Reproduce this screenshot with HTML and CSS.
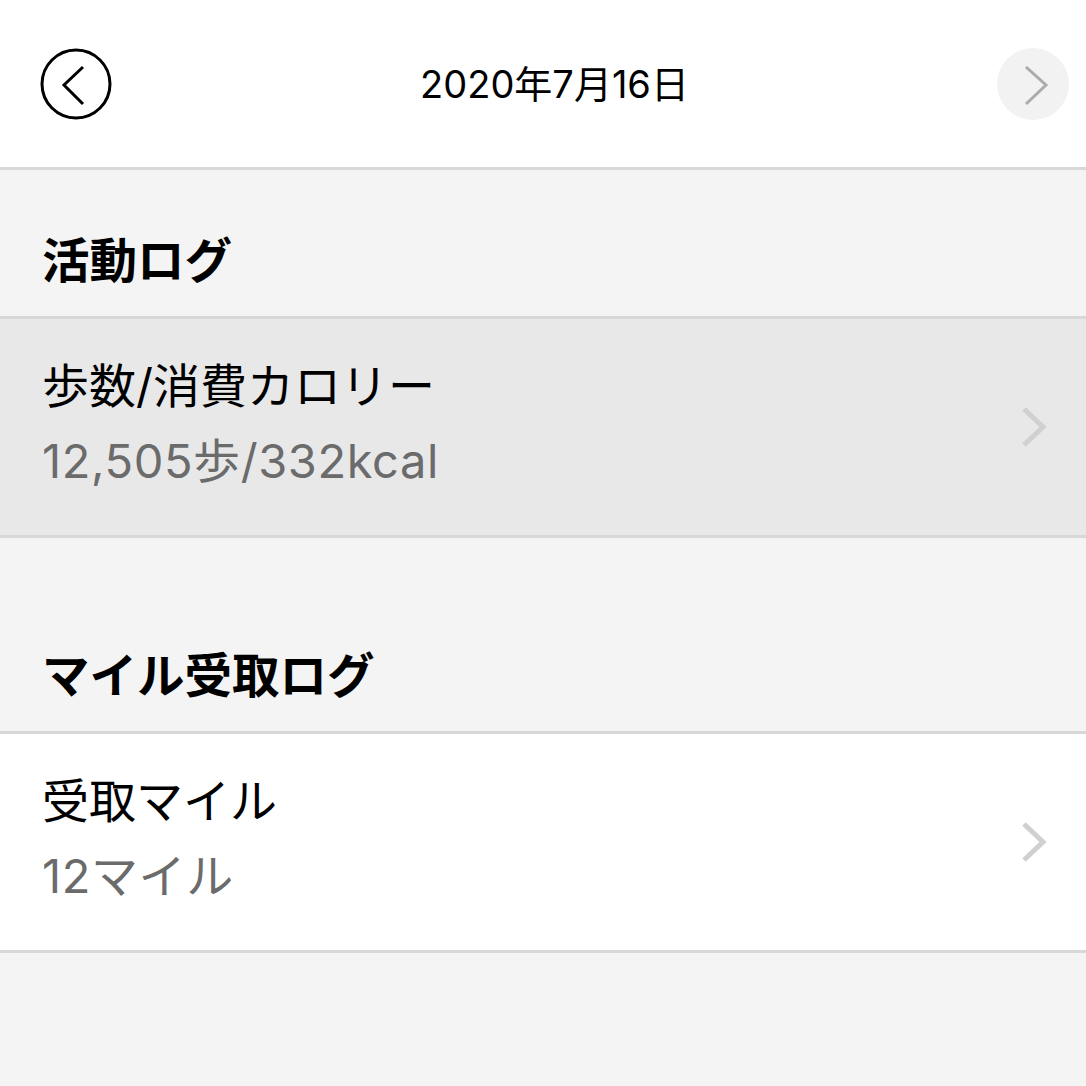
FILE: index.html
```html
<!DOCTYPE html>
<html lang="ja">
<head>
<meta charset="utf-8">
<link rel="stylesheet" href="styles.css">
</head>
<body>
<div class="page">
  <header class="topbar">
    <button class="nav-btn back" aria-label="前の日">
      <svg width="72" height="72" viewBox="0 0 72 72">
        <circle cx="36" cy="36" r="34" fill="none" stroke="#000" stroke-width="3"/>
        <polyline points="43,19 24,37 43,56" fill="none" stroke="#000" stroke-width="3"/>
      </svg>
    </button>
    <h1 class="title">2020年7月16日</h1>
    <button class="nav-btn next" aria-label="次の日">
      <svg width="72" height="72" viewBox="0 0 72 72">
        <circle cx="36" cy="36" r="36" fill="#f2f2f2"/>
        <polyline points="29,19 49,37 29,56" fill="none" stroke="#ababab" stroke-width="3"/>
      </svg>
    </button>
  </header>

  <section class="section first">
    <h2 class="section-title">活動ログ</h2>
  </section>
  <div class="row active">
    <div class="row-text">
      <div class="row-title">歩数/消費カロリー</div>
      <div class="row-sub">12,505歩/332kcal</div>
    </div>
    <svg class="chev" width="28" height="42" viewBox="0 0 28 42">
      <polyline points="3,3 22,21 3,39" fill="none" stroke="#d0d0d0" stroke-width="5"/>
    </svg>
  </div>

  <section class="section second">
    <h2 class="section-title">マイル受取ログ</h2>
  </section>
  <div class="row">
    <div class="row-text">
      <div class="row-title">受取マイル</div>
      <div class="row-sub">12マイル</div>
    </div>
    <svg class="chev" width="28" height="42" viewBox="0 0 28 42">
      <polyline points="3,3 22,21 3,39" fill="none" stroke="#d0d0d0" stroke-width="5"/>
    </svg>
  </div>
  <div class="rest"></div>
</div>
</body>
</html>
```

FILE: styles.css
```css
html, body {
  margin: 0;
  padding: 0;
  background: #f4f4f4;
}
body {
  font-family: "Inter", "Noto Sans CJK JP", sans-serif;
  color: #000;
}
.page {
  display: flex;
  flex-direction: column;
  min-height: 1086px;
}
.topbar {
  height: 167px;
  background: #fff;
  border-bottom: 3px solid #d8d8d8;
  display: grid;
  grid-template-columns: 1fr auto 1fr;
  align-items: center;
  padding: 0 17px 0 40px;
}
.nav-btn {
  border: 0;
  padding: 0;
  margin: 0;
  background: none;
  width: 72px;
  height: 72px;
  display: block;
}
.nav-btn svg { display: block; }
.next { justify-self: end; }
.title {
  margin: 0;
  font-size: 38px;
  font-weight: 400;
  line-height: 48px;
  letter-spacing: 0;
}
.section {
  padding: 0 42px 31px;
  display: flex;
  align-items: flex-end;
}
.section.first { height: 115px; }
.section.second { height: 162px; }
.section-title {
  margin: 0;
  font-size: 47.5px;
  line-height: 48px;
  font-weight: 700;
}
.row {
  background: #fff;
  border-top: 3px solid #d8d8d8;
  border-bottom: 3px solid #d8d8d8;
  height: 216px;
  display: flex;
  align-items: center;
  padding: 0 40px 0 42px;
  box-sizing: content-box;
}
.row.active { background: #e8e8e8; }
.row-text {
  flex: 1;
  display: flex;
  flex-direction: column;
  gap: 15px;
  margin-top: -8px;
}
.row-title {
  font-size: 47px;
  line-height: 60px;
}
.row-sub {
  font-size: 47px;
  line-height: 60px;
  letter-spacing: 0.6px;
  color: #6b6b6b;
}
.chev { display: block; margin-right: -3px; }
.rest { flex: 1; }
```
